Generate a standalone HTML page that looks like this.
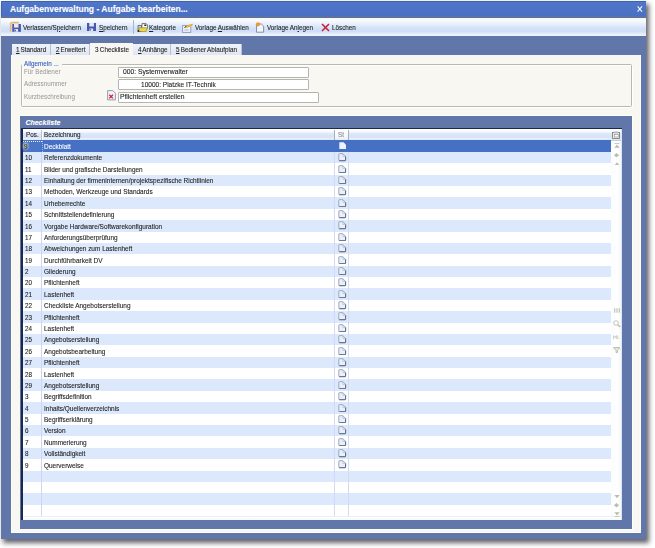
<!DOCTYPE html>
<html><head><meta charset="utf-8">
<style>
*{margin:0;padding:0;box-sizing:border-box}
html,body{width:655px;height:548px;overflow:hidden;background:#fff;font-family:"Liberation Sans",sans-serif;position:relative}
.abs{position:absolute}
.t{position:absolute;height:12px;line-height:12px;white-space:nowrap;transform-origin:0 50%;color:#222;-webkit-text-stroke:0.1px currentColor}
.u{text-decoration:underline;text-decoration-thickness:0.6px;text-underline-offset:1px}
</style></head><body>
<!-- shadow -->
<div class="abs" style="left:3px;top:4px;width:646px;height:539px;background:rgba(50,46,56,0.75);filter:blur(2.4px)"></div>
<!-- window base -->
<div class="abs" style="left:1px;top:1px;width:645px;height:538px;background:#6176a9"></div>
<!-- title -->
<div class="abs" style="left:1px;top:1px;width:645px;height:15px;background:linear-gradient(#4f76c8,#4a70c3);border-top:1px solid #3d62b0;border-left:1px solid #4066b4"></div>
<div class="t" style="left:10px;top:3px;font-size:8.5px;font-weight:bold;color:#fff">Aufgabenverwaltung - Aufgabe bearbeiten...</div>
<svg class="abs" style="left:636.8px;top:5.5px" width="6" height="6" viewBox="0 0 6 6"><path d="M0.6 0.4 L5 5.6 M5 0.4 L0.6 5.6" stroke="#f4f8ff" stroke-width="1.15"/></svg>
<div class="abs" style="left:1px;top:16px;width:645px;height:1.5px;background:#5f729e"></div>
<!-- toolbar -->
<div class="abs" style="left:1px;top:17.5px;width:645px;height:18.5px;background:linear-gradient(#f2f7fe 0%,#f9fbff 12%,#e8f0fc 33%,#d3e2f8 55%,#cfdef7 74%,#e2ecfb 87%,#f3f7fe 96%,#dfe7f4 100%)"></div>
<svg class="abs" style="left:9px;top:21px" width="13" height="12" viewBox="0 0 13 12"><path d="M1.6 10.5 V3 Q1.6 1.6 3 1.6 H10" stroke="#e9b86a" stroke-width="1.6" fill="none"/><rect x="3.3" y="3" width="8.6" height="7.8" fill="#4b57a9"/><rect x="5" y="3" width="4.5" height="3.6" fill="#e6eaf6"/><rect x="5.5" y="8" width="3.6" height="2.8" fill="#dfe5f3"/><rect x="6" y="8.8" width="1" height="1.5" fill="#4b57a9"/></svg>
<div class="t" style="left:22.7px;top:21.5px;font-size:7.1px;transform:scaleX(0.89);">Verlassen/S<span class="u">p</span>eichern</div>
<svg class="abs" style="left:87px;top:22.8px" width="9" height="8" viewBox="0 0 9 8"><rect x="0" y="0" width="9" height="8" fill="#4b57a9"/><rect x="2.3" y="0" width="4.6" height="3.5" fill="#e6eaf6"/><rect x="2.5" y="5.5" width="3.6" height="2.5" fill="#dfe5f3"/><rect x="3" y="6.2" width="1" height="1.3" fill="#4b57a9"/></svg>
<div class="t" style="left:99.1px;top:21.5px;font-size:7.1px;transform:scaleX(0.89);"><span class="u">S</span>peichern</div>
<div class="abs" style="left:132.5px;top:20px;width:1px;height:14px;background:#a9b5ca"></div>
<svg class="abs" style="left:136.5px;top:22.5px" width="11" height="9" viewBox="0 0 11 9"><path d="M1 8.5 V2.5 H4.5 V8.5Z" fill="#c9ccd6" stroke="#5a5e6a" stroke-width="0.8"/><path d="M5 3.5 V0.6 H9.2 L10.4 1.8 V5" fill="#fff" stroke="#50535e" stroke-width="0.8"/><rect x="7.3" y="1.5" width="2" height="1.5" fill="#222"/><path d="M1 8.6 L2.6 4.8 H10.6 L9 8.6Z" fill="#eed840" stroke="#8a7a20" stroke-width="0.6"/><circle cx="1.5" cy="8" r="0.9" fill="#222"/></svg>
<div class="t" style="left:149px;top:21.5px;font-size:7.1px;transform:scaleX(0.89);"><span class="u">K</span>ategorie</div>
<svg class="abs" style="left:182px;top:22.5px" width="12" height="10" viewBox="0 0 12 10"><rect x="0.6" y="2.4" width="8.2" height="7" fill="#eef0fa" stroke="#8e98b6" stroke-width="0.9"/><rect x="2.5" y="6" width="4" height="2" fill="#c8d0ee"/><path d="M2.5 4.5 L5 2.6 L9 1 L11.2 0.8 L10.4 2.6 L6.5 4.2 L4 5Z" fill="#eab03a"/><path d="M2.5 4.5 L4.2 3.3" stroke="#333" stroke-width="1"/></svg>
<div class="t" style="left:194.5px;top:21.5px;font-size:7.1px;transform:scaleX(0.89);">Vorlage <span class="u">A</span>uswählen</div>
<svg class="abs" style="left:255px;top:22px" width="10" height="11" viewBox="0 0 10 11"><path d="M1.5 2 H6.4 L8.6 4.2 V10.2 H1.5Z" fill="#f2f5fc" stroke="#7a87a2" stroke-width="0.9"/><circle cx="3" cy="2.3" r="2.1" fill="#ea9a3a"/></svg>
<div class="t" style="left:267.1px;top:21.5px;font-size:7.1px;transform:scaleX(0.89);">Vorlage An<span class="u">l</span>egen</div>
<svg class="abs" style="left:320.5px;top:23px" width="9" height="9" viewBox="0 0 9 9"><path d="M1 1 L8 8 M8 1 L1 8" stroke="#c81c30" stroke-width="1.5"/></svg>
<div class="t" style="left:332px;top:21.5px;font-size:7.1px;transform:scaleX(0.89);">Löschen</div>
<!-- tabs -->
<div class="abs" style="left:12px;top:44px;width:39px;height:11px;background:linear-gradient(#f0f4fa,#dfe6f3);border-right:1px solid #b4c0d8"></div>
<div class="abs" style="left:51px;top:44px;width:39px;height:11px;background:linear-gradient(#f0f4fa,#dfe6f3);border-right:1px solid #b4c0d8"></div>
<div class="abs" style="left:90px;top:43px;width:43px;height:12px;background:#f8f7f3"></div>
<div class="abs" style="left:133px;top:44px;width:38px;height:11px;background:linear-gradient(#f0f4fa,#dfe6f3);border-right:1px solid #b4c0d8"></div>
<div class="abs" style="left:171px;top:44px;width:71px;height:11px;background:linear-gradient(#f0f4fa,#dfe6f3);border-right:1px solid #b4c0d8"></div>
<div class="t" style="left:15.9px;top:44.3px;font-size:7.1px;transform:scaleX(0.89);word-spacing:-0.8px"><span class="u">1</span> Standard</div>
<div class="t" style="left:55.6px;top:44.3px;font-size:7.1px;transform:scaleX(0.89);word-spacing:-0.8px"><span class="u">2</span> Erweitert</div>
<div class="t" style="left:94.8px;top:43.6px;font-size:7.1px;transform:scaleX(0.89);word-spacing:-0.5px">3 Checkliste</div>
<div class="t" style="left:137.5px;top:44.3px;font-size:7.1px;transform:scaleX(0.89);word-spacing:-0.8px"><span class="u">4</span> Anhänge</div>
<div class="t" style="left:176.2px;top:44.3px;font-size:7.1px;transform:scaleX(0.89);word-spacing:-0.5px"><span class="u">5</span> Bediener Ablaufplan</div>
<!-- content panel -->
<div class="abs" style="left:11px;top:55px;width:630px;height:478px;background:#fdfdfb"></div>
<div class="abs" style="left:12px;top:55px;width:628px;height:477px;background:#f8f7f2"></div>
<!-- group box -->
<div class="abs" style="left:21px;top:63.5px;width:611px;height:43.5px;border:1px solid #bab8b0;border-radius:1.5px;box-shadow:1px 1px 0 #fff, inset 1px 1px 0 #fff"></div>
<div class="abs" style="left:22px;top:59px;width:40px;height:9px;background:#f8f7f2"></div>
<div class="t" style="left:23.8px;top:57.5px;font-size:7.1px;transform:scaleX(0.89);color:#2e5cbc;">Allgemein ...</div>
<div class="t" style="left:24.4px;top:65.6px;font-size:7.1px;transform:scaleX(0.89);color:#969696;-webkit-text-stroke:0">Für Bediener</div>
<div class="t" style="left:24.4px;top:78.2px;font-size:7.1px;transform:scaleX(0.89);color:#969696;-webkit-text-stroke:0">Adressnummer</div>
<div class="t" style="left:24.4px;top:90.7px;font-size:7.1px;transform:scaleX(0.89);color:#969696;-webkit-text-stroke:0">Kurzbeschreibung</div>
<div class="abs" style="left:118px;top:66.5px;width:191px;height:11px;background:#fff;border:1px solid #b5b5b0;border-radius:1px"></div>
<div class="abs" style="left:118px;top:79px;width:191px;height:11px;background:#fff;border:1px solid #b5b5b0;border-radius:1px"></div>
<div class="abs" style="left:118px;top:91.5px;width:201px;height:11.5px;background:#fff;border:1px solid #b5b5b0;border-radius:1px"></div>
<div class="t" style="left:122.8px;top:66px;font-size:7.1px;transform:scaleX(0.95);">000: Systemverwalter</div>
<div class="t" style="left:140.8px;top:78.8px;font-size:7.1px;transform:scaleX(0.92);">10000: Platzke IT-Technik</div>
<div class="t" style="left:120px;top:90.8px;font-size:7.1px;transform:scaleX(0.95);">Pflichtenheft erstellen</div>
<svg class="abs" style="left:106.5px;top:90px" width="9" height="10.5" viewBox="0 0 9 10.5"><path d="M0.6 0.6 L5.8 0.6 L8.4 3.2 L8.4 9.9 L0.6 9.9Z" fill="#eef2fa" stroke="#8594b4" stroke-width="0.9"/><path d="M2.3 4.8 L5.9 8.4 M5.9 4.8 L2.3 8.4" stroke="#e01c24" stroke-width="1.3"/></svg>
<!-- checkliste panel -->
<div class="abs" style="left:19.5px;top:114.5px;width:613.5px;height:415px;background:#fdfdfb"></div>
<div class="abs" style="left:20px;top:115.5px;width:612px;height:413px;background:#6176a9"></div>
<div class="t" style="left:25.4px;top:117px;font-size:7px;font-weight:bold;font-style:italic;color:#fff">Checkliste</div>
<!-- grid -->
<div class="abs" style="left:21px;top:127.8px;width:601px;height:391.8px;background:#fff;border-top:1.5px solid #1d2948;border-left:2px solid #1d2948"></div>
<div class="abs" style="left:23px;top:129.3px;width:599px;height:11.4px;background:linear-gradient(#ffffff 0%,#f6f9fe 22%,#dce8f9 40%,#d5e3f7 68%,#edf3fc 84%,#b2c3dc 100%)"></div>
<div class="abs" style="left:41.2px;top:130px;width:1px;height:10px;background:#b8c0cc"></div>
<div class="abs" style="left:42.2px;top:130px;width:1px;height:10px;background:#fff"></div>
<div class="abs" style="left:334px;top:129.5px;width:15px;height:11px;border-left:1px solid #a8aeb8;border-right:1px solid #a8aeb8;background:linear-gradient(#ffffff,#f4f7fc 60%,#e2eaf7)"></div>
<div class="t" style="left:25.6px;top:129.3px;font-size:7.1px;transform:scaleX(0.89);">Pos.</div>
<div class="t" style="left:44.3px;top:129.3px;font-size:7.1px;transform:scaleX(0.89);">Bezeichnung</div>
<div class="t" style="left:337.7px;top:129.3px;font-size:7.1px;transform:scaleX(0.89);color:#8a8a8a;">St</div>
<div class="abs" style="left:23px;top:140.45px;width:588px;height:11.383px;background:#4570c4"></div>
<div class="abs" style="left:23px;top:140.45px;width:18px;height:11.383px;background:#4a74c4"></div>
<div class="abs" style="left:23.2px;top:143.45px;width:4.5px;height:6px;background:#f4efe0;filter:blur(0.9px);opacity:.65"></div>
<div class="t" style="left:24.2px;top:140.85px;font-size:7.1px;transform:scaleX(0.89);color:#3a3012;">9</div>
<div class="t" style="left:43.8px;top:140.85px;font-size:7.1px;transform:scaleX(0.91);color:#fff;">Deckblatt</div>
<svg class="abs" style="left:338.5px;top:141.75px" width="8" height="8" viewBox="0 0 8 8"><path d="M0.3 0.3 H4.6 L7 2.7 V7 H0.3Z" fill="#eef3fc"/></svg>
<div class="abs" style="left:23px;top:151.83px;width:588px;height:11.383px;background:#dce8fb"></div>
<div class="t" style="left:24.6px;top:152.233px;font-size:7.1px;transform:scaleX(0.89);color:#222;">10</div>
<div class="t" style="left:43.8px;top:152.233px;font-size:7.1px;transform:scaleX(0.91);color:#222;">Referenzdokumente</div>
<svg class="abs" style="left:338px;top:153.13px" width="8.5" height="8.5" viewBox="0 0 8.5 8.5"><path d="M0.8 1.2 Q0.8 0.7 1.3 0.7 H4.9 L7.6 3.4 V7.2 Q7.6 7.7 7.1 7.7 H1.3 Q0.8 7.7 0.8 7.2Z" fill="#e9f0fb" stroke="#8a97b0" stroke-width="0.8"/><path d="M7.6 3.4 V7.2 Q7.6 7.7 7.1 7.7 H1.3" fill="none" stroke="#5d6a84" stroke-width="1"/><path d="M4.9 0.7 V3.4 H7.6" fill="none" stroke="#a5b1c8" stroke-width="0.6"/></svg>
<div class="abs" style="left:23px;top:163.22px;width:588px;height:11.383px;background:#ffffff"></div>
<div class="t" style="left:24.6px;top:163.61599999999999px;font-size:7.1px;transform:scaleX(0.89);color:#222;">11</div>
<div class="t" style="left:43.8px;top:163.61599999999999px;font-size:7.1px;transform:scaleX(0.91);color:#222;">Bilder und grafische Darstellungen</div>
<svg class="abs" style="left:338px;top:164.52px" width="8.5" height="8.5" viewBox="0 0 8.5 8.5"><path d="M0.8 1.2 Q0.8 0.7 1.3 0.7 H4.9 L7.6 3.4 V7.2 Q7.6 7.7 7.1 7.7 H1.3 Q0.8 7.7 0.8 7.2Z" fill="#e9f0fb" stroke="#8a97b0" stroke-width="0.8"/><path d="M7.6 3.4 V7.2 Q7.6 7.7 7.1 7.7 H1.3" fill="none" stroke="#5d6a84" stroke-width="1"/><path d="M4.9 0.7 V3.4 H7.6" fill="none" stroke="#a5b1c8" stroke-width="0.6"/></svg>
<div class="abs" style="left:23px;top:174.60px;width:588px;height:11.383px;background:#dce8fb"></div>
<div class="t" style="left:24.6px;top:174.999px;font-size:7.1px;transform:scaleX(0.89);color:#222;">12</div>
<div class="t" style="left:43.8px;top:174.999px;font-size:7.1px;transform:scaleX(0.91);color:#222;">Einhaltung der firmeninternen/projektspezifische Richtlinien</div>
<svg class="abs" style="left:338px;top:175.90px" width="8.5" height="8.5" viewBox="0 0 8.5 8.5"><path d="M0.8 1.2 Q0.8 0.7 1.3 0.7 H4.9 L7.6 3.4 V7.2 Q7.6 7.7 7.1 7.7 H1.3 Q0.8 7.7 0.8 7.2Z" fill="#e9f0fb" stroke="#8a97b0" stroke-width="0.8"/><path d="M7.6 3.4 V7.2 Q7.6 7.7 7.1 7.7 H1.3" fill="none" stroke="#5d6a84" stroke-width="1"/><path d="M4.9 0.7 V3.4 H7.6" fill="none" stroke="#a5b1c8" stroke-width="0.6"/></svg>
<div class="abs" style="left:23px;top:185.98px;width:588px;height:11.383px;background:#ffffff"></div>
<div class="t" style="left:24.6px;top:186.38199999999998px;font-size:7.1px;transform:scaleX(0.89);color:#222;">13</div>
<div class="t" style="left:43.8px;top:186.38199999999998px;font-size:7.1px;transform:scaleX(0.91);color:#222;">Methoden, Werkzeuge und Standards</div>
<svg class="abs" style="left:338px;top:187.28px" width="8.5" height="8.5" viewBox="0 0 8.5 8.5"><path d="M0.8 1.2 Q0.8 0.7 1.3 0.7 H4.9 L7.6 3.4 V7.2 Q7.6 7.7 7.1 7.7 H1.3 Q0.8 7.7 0.8 7.2Z" fill="#e9f0fb" stroke="#8a97b0" stroke-width="0.8"/><path d="M7.6 3.4 V7.2 Q7.6 7.7 7.1 7.7 H1.3" fill="none" stroke="#5d6a84" stroke-width="1"/><path d="M4.9 0.7 V3.4 H7.6" fill="none" stroke="#a5b1c8" stroke-width="0.6"/></svg>
<div class="abs" style="left:23px;top:197.36px;width:588px;height:11.383px;background:#dce8fb"></div>
<div class="t" style="left:24.6px;top:197.765px;font-size:7.1px;transform:scaleX(0.89);color:#222;">14</div>
<div class="t" style="left:43.8px;top:197.765px;font-size:7.1px;transform:scaleX(0.91);color:#222;">Urheberrechte</div>
<svg class="abs" style="left:338px;top:198.66px" width="8.5" height="8.5" viewBox="0 0 8.5 8.5"><path d="M0.8 1.2 Q0.8 0.7 1.3 0.7 H4.9 L7.6 3.4 V7.2 Q7.6 7.7 7.1 7.7 H1.3 Q0.8 7.7 0.8 7.2Z" fill="#e9f0fb" stroke="#8a97b0" stroke-width="0.8"/><path d="M7.6 3.4 V7.2 Q7.6 7.7 7.1 7.7 H1.3" fill="none" stroke="#5d6a84" stroke-width="1"/><path d="M4.9 0.7 V3.4 H7.6" fill="none" stroke="#a5b1c8" stroke-width="0.6"/></svg>
<div class="abs" style="left:23px;top:208.75px;width:588px;height:11.383px;background:#ffffff"></div>
<div class="t" style="left:24.6px;top:209.148px;font-size:7.1px;transform:scaleX(0.89);color:#222;">15</div>
<div class="t" style="left:43.8px;top:209.148px;font-size:7.1px;transform:scaleX(0.91);color:#222;">Schnittstellendefinierung</div>
<svg class="abs" style="left:338px;top:210.05px" width="8.5" height="8.5" viewBox="0 0 8.5 8.5"><path d="M0.8 1.2 Q0.8 0.7 1.3 0.7 H4.9 L7.6 3.4 V7.2 Q7.6 7.7 7.1 7.7 H1.3 Q0.8 7.7 0.8 7.2Z" fill="#e9f0fb" stroke="#8a97b0" stroke-width="0.8"/><path d="M7.6 3.4 V7.2 Q7.6 7.7 7.1 7.7 H1.3" fill="none" stroke="#5d6a84" stroke-width="1"/><path d="M4.9 0.7 V3.4 H7.6" fill="none" stroke="#a5b1c8" stroke-width="0.6"/></svg>
<div class="abs" style="left:23px;top:220.13px;width:588px;height:11.383px;background:#dce8fb"></div>
<div class="t" style="left:24.6px;top:220.53099999999998px;font-size:7.1px;transform:scaleX(0.89);color:#222;">16</div>
<div class="t" style="left:43.8px;top:220.53099999999998px;font-size:7.1px;transform:scaleX(0.91);color:#222;">Vorgabe Hardware/Softwarekonfiguration</div>
<svg class="abs" style="left:338px;top:221.43px" width="8.5" height="8.5" viewBox="0 0 8.5 8.5"><path d="M0.8 1.2 Q0.8 0.7 1.3 0.7 H4.9 L7.6 3.4 V7.2 Q7.6 7.7 7.1 7.7 H1.3 Q0.8 7.7 0.8 7.2Z" fill="#e9f0fb" stroke="#8a97b0" stroke-width="0.8"/><path d="M7.6 3.4 V7.2 Q7.6 7.7 7.1 7.7 H1.3" fill="none" stroke="#5d6a84" stroke-width="1"/><path d="M4.9 0.7 V3.4 H7.6" fill="none" stroke="#a5b1c8" stroke-width="0.6"/></svg>
<div class="abs" style="left:23px;top:231.51px;width:588px;height:11.383px;background:#ffffff"></div>
<div class="t" style="left:24.6px;top:231.914px;font-size:7.1px;transform:scaleX(0.89);color:#222;">17</div>
<div class="t" style="left:43.8px;top:231.914px;font-size:7.1px;transform:scaleX(0.91);color:#222;">Anforderungsüberprüfung</div>
<svg class="abs" style="left:338px;top:232.81px" width="8.5" height="8.5" viewBox="0 0 8.5 8.5"><path d="M0.8 1.2 Q0.8 0.7 1.3 0.7 H4.9 L7.6 3.4 V7.2 Q7.6 7.7 7.1 7.7 H1.3 Q0.8 7.7 0.8 7.2Z" fill="#e9f0fb" stroke="#8a97b0" stroke-width="0.8"/><path d="M7.6 3.4 V7.2 Q7.6 7.7 7.1 7.7 H1.3" fill="none" stroke="#5d6a84" stroke-width="1"/><path d="M4.9 0.7 V3.4 H7.6" fill="none" stroke="#a5b1c8" stroke-width="0.6"/></svg>
<div class="abs" style="left:23px;top:242.90px;width:588px;height:11.383px;background:#dce8fb"></div>
<div class="t" style="left:24.6px;top:243.297px;font-size:7.1px;transform:scaleX(0.89);color:#222;">18</div>
<div class="t" style="left:43.8px;top:243.297px;font-size:7.1px;transform:scaleX(0.91);color:#222;">Abweichungen zum Lastenheft</div>
<svg class="abs" style="left:338px;top:244.20px" width="8.5" height="8.5" viewBox="0 0 8.5 8.5"><path d="M0.8 1.2 Q0.8 0.7 1.3 0.7 H4.9 L7.6 3.4 V7.2 Q7.6 7.7 7.1 7.7 H1.3 Q0.8 7.7 0.8 7.2Z" fill="#e9f0fb" stroke="#8a97b0" stroke-width="0.8"/><path d="M7.6 3.4 V7.2 Q7.6 7.7 7.1 7.7 H1.3" fill="none" stroke="#5d6a84" stroke-width="1"/><path d="M4.9 0.7 V3.4 H7.6" fill="none" stroke="#a5b1c8" stroke-width="0.6"/></svg>
<div class="abs" style="left:23px;top:254.28px;width:588px;height:11.383px;background:#ffffff"></div>
<div class="t" style="left:24.6px;top:254.67999999999995px;font-size:7.1px;transform:scaleX(0.89);color:#222;">19</div>
<div class="t" style="left:43.8px;top:254.67999999999995px;font-size:7.1px;transform:scaleX(0.91);color:#222;">Durchführbarkeit DV</div>
<svg class="abs" style="left:338px;top:255.58px" width="8.5" height="8.5" viewBox="0 0 8.5 8.5"><path d="M0.8 1.2 Q0.8 0.7 1.3 0.7 H4.9 L7.6 3.4 V7.2 Q7.6 7.7 7.1 7.7 H1.3 Q0.8 7.7 0.8 7.2Z" fill="#e9f0fb" stroke="#8a97b0" stroke-width="0.8"/><path d="M7.6 3.4 V7.2 Q7.6 7.7 7.1 7.7 H1.3" fill="none" stroke="#5d6a84" stroke-width="1"/><path d="M4.9 0.7 V3.4 H7.6" fill="none" stroke="#a5b1c8" stroke-width="0.6"/></svg>
<div class="abs" style="left:23px;top:265.66px;width:588px;height:11.383px;background:#dce8fb"></div>
<div class="t" style="left:24.6px;top:266.063px;font-size:7.1px;transform:scaleX(0.89);color:#222;">2</div>
<div class="t" style="left:43.8px;top:266.063px;font-size:7.1px;transform:scaleX(0.91);color:#222;">Gliederung</div>
<svg class="abs" style="left:338px;top:266.96px" width="8.5" height="8.5" viewBox="0 0 8.5 8.5"><path d="M0.8 1.2 Q0.8 0.7 1.3 0.7 H4.9 L7.6 3.4 V7.2 Q7.6 7.7 7.1 7.7 H1.3 Q0.8 7.7 0.8 7.2Z" fill="#e9f0fb" stroke="#8a97b0" stroke-width="0.8"/><path d="M7.6 3.4 V7.2 Q7.6 7.7 7.1 7.7 H1.3" fill="none" stroke="#5d6a84" stroke-width="1"/><path d="M4.9 0.7 V3.4 H7.6" fill="none" stroke="#a5b1c8" stroke-width="0.6"/></svg>
<div class="abs" style="left:23px;top:277.05px;width:588px;height:11.383px;background:#ffffff"></div>
<div class="t" style="left:24.6px;top:277.44599999999997px;font-size:7.1px;transform:scaleX(0.89);color:#222;">20</div>
<div class="t" style="left:43.8px;top:277.44599999999997px;font-size:7.1px;transform:scaleX(0.91);color:#222;">Pflichtenheft</div>
<svg class="abs" style="left:338px;top:278.35px" width="8.5" height="8.5" viewBox="0 0 8.5 8.5"><path d="M0.8 1.2 Q0.8 0.7 1.3 0.7 H4.9 L7.6 3.4 V7.2 Q7.6 7.7 7.1 7.7 H1.3 Q0.8 7.7 0.8 7.2Z" fill="#e9f0fb" stroke="#8a97b0" stroke-width="0.8"/><path d="M7.6 3.4 V7.2 Q7.6 7.7 7.1 7.7 H1.3" fill="none" stroke="#5d6a84" stroke-width="1"/><path d="M4.9 0.7 V3.4 H7.6" fill="none" stroke="#a5b1c8" stroke-width="0.6"/></svg>
<div class="abs" style="left:23px;top:288.43px;width:588px;height:11.383px;background:#dce8fb"></div>
<div class="t" style="left:24.6px;top:288.82899999999995px;font-size:7.1px;transform:scaleX(0.89);color:#222;">21</div>
<div class="t" style="left:43.8px;top:288.82899999999995px;font-size:7.1px;transform:scaleX(0.91);color:#222;">Lastenheft</div>
<svg class="abs" style="left:338px;top:289.73px" width="8.5" height="8.5" viewBox="0 0 8.5 8.5"><path d="M0.8 1.2 Q0.8 0.7 1.3 0.7 H4.9 L7.6 3.4 V7.2 Q7.6 7.7 7.1 7.7 H1.3 Q0.8 7.7 0.8 7.2Z" fill="#e9f0fb" stroke="#8a97b0" stroke-width="0.8"/><path d="M7.6 3.4 V7.2 Q7.6 7.7 7.1 7.7 H1.3" fill="none" stroke="#5d6a84" stroke-width="1"/><path d="M4.9 0.7 V3.4 H7.6" fill="none" stroke="#a5b1c8" stroke-width="0.6"/></svg>
<div class="abs" style="left:23px;top:299.81px;width:588px;height:11.383px;background:#ffffff"></div>
<div class="t" style="left:24.6px;top:300.212px;font-size:7.1px;transform:scaleX(0.89);color:#222;">22</div>
<div class="t" style="left:43.8px;top:300.212px;font-size:7.1px;transform:scaleX(0.91);color:#222;">Checkliste Angebotserstellung</div>
<svg class="abs" style="left:338px;top:301.11px" width="8.5" height="8.5" viewBox="0 0 8.5 8.5"><path d="M0.8 1.2 Q0.8 0.7 1.3 0.7 H4.9 L7.6 3.4 V7.2 Q7.6 7.7 7.1 7.7 H1.3 Q0.8 7.7 0.8 7.2Z" fill="#e9f0fb" stroke="#8a97b0" stroke-width="0.8"/><path d="M7.6 3.4 V7.2 Q7.6 7.7 7.1 7.7 H1.3" fill="none" stroke="#5d6a84" stroke-width="1"/><path d="M4.9 0.7 V3.4 H7.6" fill="none" stroke="#a5b1c8" stroke-width="0.6"/></svg>
<div class="abs" style="left:23px;top:311.19px;width:588px;height:11.383px;background:#dce8fb"></div>
<div class="t" style="left:24.6px;top:311.5949999999999px;font-size:7.1px;transform:scaleX(0.89);color:#222;">23</div>
<div class="t" style="left:43.8px;top:311.5949999999999px;font-size:7.1px;transform:scaleX(0.91);color:#222;">Pflichtenheft</div>
<svg class="abs" style="left:338px;top:312.49px" width="8.5" height="8.5" viewBox="0 0 8.5 8.5"><path d="M0.8 1.2 Q0.8 0.7 1.3 0.7 H4.9 L7.6 3.4 V7.2 Q7.6 7.7 7.1 7.7 H1.3 Q0.8 7.7 0.8 7.2Z" fill="#e9f0fb" stroke="#8a97b0" stroke-width="0.8"/><path d="M7.6 3.4 V7.2 Q7.6 7.7 7.1 7.7 H1.3" fill="none" stroke="#5d6a84" stroke-width="1"/><path d="M4.9 0.7 V3.4 H7.6" fill="none" stroke="#a5b1c8" stroke-width="0.6"/></svg>
<div class="abs" style="left:23px;top:322.58px;width:588px;height:11.383px;background:#ffffff"></div>
<div class="t" style="left:24.6px;top:322.97799999999995px;font-size:7.1px;transform:scaleX(0.89);color:#222;">24</div>
<div class="t" style="left:43.8px;top:322.97799999999995px;font-size:7.1px;transform:scaleX(0.91);color:#222;">Lastenheft</div>
<svg class="abs" style="left:338px;top:323.88px" width="8.5" height="8.5" viewBox="0 0 8.5 8.5"><path d="M0.8 1.2 Q0.8 0.7 1.3 0.7 H4.9 L7.6 3.4 V7.2 Q7.6 7.7 7.1 7.7 H1.3 Q0.8 7.7 0.8 7.2Z" fill="#e9f0fb" stroke="#8a97b0" stroke-width="0.8"/><path d="M7.6 3.4 V7.2 Q7.6 7.7 7.1 7.7 H1.3" fill="none" stroke="#5d6a84" stroke-width="1"/><path d="M4.9 0.7 V3.4 H7.6" fill="none" stroke="#a5b1c8" stroke-width="0.6"/></svg>
<div class="abs" style="left:23px;top:333.96px;width:588px;height:11.383px;background:#dce8fb"></div>
<div class="t" style="left:24.6px;top:334.361px;font-size:7.1px;transform:scaleX(0.89);color:#222;">25</div>
<div class="t" style="left:43.8px;top:334.361px;font-size:7.1px;transform:scaleX(0.91);color:#222;">Angebotserstellung</div>
<svg class="abs" style="left:338px;top:335.26px" width="8.5" height="8.5" viewBox="0 0 8.5 8.5"><path d="M0.8 1.2 Q0.8 0.7 1.3 0.7 H4.9 L7.6 3.4 V7.2 Q7.6 7.7 7.1 7.7 H1.3 Q0.8 7.7 0.8 7.2Z" fill="#e9f0fb" stroke="#8a97b0" stroke-width="0.8"/><path d="M7.6 3.4 V7.2 Q7.6 7.7 7.1 7.7 H1.3" fill="none" stroke="#5d6a84" stroke-width="1"/><path d="M4.9 0.7 V3.4 H7.6" fill="none" stroke="#a5b1c8" stroke-width="0.6"/></svg>
<div class="abs" style="left:23px;top:345.34px;width:588px;height:11.383px;background:#ffffff"></div>
<div class="t" style="left:24.6px;top:345.7439999999999px;font-size:7.1px;transform:scaleX(0.89);color:#222;">26</div>
<div class="t" style="left:43.8px;top:345.7439999999999px;font-size:7.1px;transform:scaleX(0.91);color:#222;">Angebotsbearbeitung</div>
<svg class="abs" style="left:338px;top:346.64px" width="8.5" height="8.5" viewBox="0 0 8.5 8.5"><path d="M0.8 1.2 Q0.8 0.7 1.3 0.7 H4.9 L7.6 3.4 V7.2 Q7.6 7.7 7.1 7.7 H1.3 Q0.8 7.7 0.8 7.2Z" fill="#e9f0fb" stroke="#8a97b0" stroke-width="0.8"/><path d="M7.6 3.4 V7.2 Q7.6 7.7 7.1 7.7 H1.3" fill="none" stroke="#5d6a84" stroke-width="1"/><path d="M4.9 0.7 V3.4 H7.6" fill="none" stroke="#a5b1c8" stroke-width="0.6"/></svg>
<div class="abs" style="left:23px;top:356.73px;width:588px;height:11.383px;background:#dce8fb"></div>
<div class="t" style="left:24.6px;top:357.12699999999995px;font-size:7.1px;transform:scaleX(0.89);color:#222;">27</div>
<div class="t" style="left:43.8px;top:357.12699999999995px;font-size:7.1px;transform:scaleX(0.91);color:#222;">Pflichtenheft</div>
<svg class="abs" style="left:338px;top:358.03px" width="8.5" height="8.5" viewBox="0 0 8.5 8.5"><path d="M0.8 1.2 Q0.8 0.7 1.3 0.7 H4.9 L7.6 3.4 V7.2 Q7.6 7.7 7.1 7.7 H1.3 Q0.8 7.7 0.8 7.2Z" fill="#e9f0fb" stroke="#8a97b0" stroke-width="0.8"/><path d="M7.6 3.4 V7.2 Q7.6 7.7 7.1 7.7 H1.3" fill="none" stroke="#5d6a84" stroke-width="1"/><path d="M4.9 0.7 V3.4 H7.6" fill="none" stroke="#a5b1c8" stroke-width="0.6"/></svg>
<div class="abs" style="left:23px;top:368.11px;width:588px;height:11.383px;background:#ffffff"></div>
<div class="t" style="left:24.6px;top:368.50999999999993px;font-size:7.1px;transform:scaleX(0.89);color:#222;">28</div>
<div class="t" style="left:43.8px;top:368.50999999999993px;font-size:7.1px;transform:scaleX(0.91);color:#222;">Lastenheft</div>
<svg class="abs" style="left:338px;top:369.41px" width="8.5" height="8.5" viewBox="0 0 8.5 8.5"><path d="M0.8 1.2 Q0.8 0.7 1.3 0.7 H4.9 L7.6 3.4 V7.2 Q7.6 7.7 7.1 7.7 H1.3 Q0.8 7.7 0.8 7.2Z" fill="#e9f0fb" stroke="#8a97b0" stroke-width="0.8"/><path d="M7.6 3.4 V7.2 Q7.6 7.7 7.1 7.7 H1.3" fill="none" stroke="#5d6a84" stroke-width="1"/><path d="M4.9 0.7 V3.4 H7.6" fill="none" stroke="#a5b1c8" stroke-width="0.6"/></svg>
<div class="abs" style="left:23px;top:379.49px;width:588px;height:11.383px;background:#dce8fb"></div>
<div class="t" style="left:24.6px;top:379.8929999999999px;font-size:7.1px;transform:scaleX(0.89);color:#222;">29</div>
<div class="t" style="left:43.8px;top:379.8929999999999px;font-size:7.1px;transform:scaleX(0.91);color:#222;">Angebotserstellung</div>
<svg class="abs" style="left:338px;top:380.79px" width="8.5" height="8.5" viewBox="0 0 8.5 8.5"><path d="M0.8 1.2 Q0.8 0.7 1.3 0.7 H4.9 L7.6 3.4 V7.2 Q7.6 7.7 7.1 7.7 H1.3 Q0.8 7.7 0.8 7.2Z" fill="#e9f0fb" stroke="#8a97b0" stroke-width="0.8"/><path d="M7.6 3.4 V7.2 Q7.6 7.7 7.1 7.7 H1.3" fill="none" stroke="#5d6a84" stroke-width="1"/><path d="M4.9 0.7 V3.4 H7.6" fill="none" stroke="#a5b1c8" stroke-width="0.6"/></svg>
<div class="abs" style="left:23px;top:390.88px;width:588px;height:11.383px;background:#ffffff"></div>
<div class="t" style="left:24.6px;top:391.27599999999995px;font-size:7.1px;transform:scaleX(0.89);color:#222;">3</div>
<div class="t" style="left:43.8px;top:391.27599999999995px;font-size:7.1px;transform:scaleX(0.91);color:#222;">Begriffsdefinition</div>
<svg class="abs" style="left:338px;top:392.18px" width="8.5" height="8.5" viewBox="0 0 8.5 8.5"><path d="M0.8 1.2 Q0.8 0.7 1.3 0.7 H4.9 L7.6 3.4 V7.2 Q7.6 7.7 7.1 7.7 H1.3 Q0.8 7.7 0.8 7.2Z" fill="#e9f0fb" stroke="#8a97b0" stroke-width="0.8"/><path d="M7.6 3.4 V7.2 Q7.6 7.7 7.1 7.7 H1.3" fill="none" stroke="#5d6a84" stroke-width="1"/><path d="M4.9 0.7 V3.4 H7.6" fill="none" stroke="#a5b1c8" stroke-width="0.6"/></svg>
<div class="abs" style="left:23px;top:402.26px;width:588px;height:11.383px;background:#dce8fb"></div>
<div class="t" style="left:24.6px;top:402.65899999999993px;font-size:7.1px;transform:scaleX(0.89);color:#222;">4</div>
<div class="t" style="left:43.8px;top:402.65899999999993px;font-size:7.1px;transform:scaleX(0.91);color:#222;">Inhalts/Quellenverzeichnis</div>
<svg class="abs" style="left:338px;top:403.56px" width="8.5" height="8.5" viewBox="0 0 8.5 8.5"><path d="M0.8 1.2 Q0.8 0.7 1.3 0.7 H4.9 L7.6 3.4 V7.2 Q7.6 7.7 7.1 7.7 H1.3 Q0.8 7.7 0.8 7.2Z" fill="#e9f0fb" stroke="#8a97b0" stroke-width="0.8"/><path d="M7.6 3.4 V7.2 Q7.6 7.7 7.1 7.7 H1.3" fill="none" stroke="#5d6a84" stroke-width="1"/><path d="M4.9 0.7 V3.4 H7.6" fill="none" stroke="#a5b1c8" stroke-width="0.6"/></svg>
<div class="abs" style="left:23px;top:413.64px;width:588px;height:11.383px;background:#ffffff"></div>
<div class="t" style="left:24.6px;top:414.042px;font-size:7.1px;transform:scaleX(0.89);color:#222;">5</div>
<div class="t" style="left:43.8px;top:414.042px;font-size:7.1px;transform:scaleX(0.91);color:#222;">Begriffserklärung</div>
<svg class="abs" style="left:338px;top:414.94px" width="8.5" height="8.5" viewBox="0 0 8.5 8.5"><path d="M0.8 1.2 Q0.8 0.7 1.3 0.7 H4.9 L7.6 3.4 V7.2 Q7.6 7.7 7.1 7.7 H1.3 Q0.8 7.7 0.8 7.2Z" fill="#e9f0fb" stroke="#8a97b0" stroke-width="0.8"/><path d="M7.6 3.4 V7.2 Q7.6 7.7 7.1 7.7 H1.3" fill="none" stroke="#5d6a84" stroke-width="1"/><path d="M4.9 0.7 V3.4 H7.6" fill="none" stroke="#a5b1c8" stroke-width="0.6"/></svg>
<div class="abs" style="left:23px;top:425.02px;width:588px;height:11.383px;background:#dce8fb"></div>
<div class="t" style="left:24.6px;top:425.42499999999995px;font-size:7.1px;transform:scaleX(0.89);color:#222;">6</div>
<div class="t" style="left:43.8px;top:425.42499999999995px;font-size:7.1px;transform:scaleX(0.91);color:#222;">Version</div>
<svg class="abs" style="left:338px;top:426.32px" width="8.5" height="8.5" viewBox="0 0 8.5 8.5"><path d="M0.8 1.2 Q0.8 0.7 1.3 0.7 H4.9 L7.6 3.4 V7.2 Q7.6 7.7 7.1 7.7 H1.3 Q0.8 7.7 0.8 7.2Z" fill="#e9f0fb" stroke="#8a97b0" stroke-width="0.8"/><path d="M7.6 3.4 V7.2 Q7.6 7.7 7.1 7.7 H1.3" fill="none" stroke="#5d6a84" stroke-width="1"/><path d="M4.9 0.7 V3.4 H7.6" fill="none" stroke="#a5b1c8" stroke-width="0.6"/></svg>
<div class="abs" style="left:23px;top:436.41px;width:588px;height:11.383px;background:#ffffff"></div>
<div class="t" style="left:24.6px;top:436.80799999999994px;font-size:7.1px;transform:scaleX(0.89);color:#222;">7</div>
<div class="t" style="left:43.8px;top:436.80799999999994px;font-size:7.1px;transform:scaleX(0.91);color:#222;">Nummerierung</div>
<svg class="abs" style="left:338px;top:437.71px" width="8.5" height="8.5" viewBox="0 0 8.5 8.5"><path d="M0.8 1.2 Q0.8 0.7 1.3 0.7 H4.9 L7.6 3.4 V7.2 Q7.6 7.7 7.1 7.7 H1.3 Q0.8 7.7 0.8 7.2Z" fill="#e9f0fb" stroke="#8a97b0" stroke-width="0.8"/><path d="M7.6 3.4 V7.2 Q7.6 7.7 7.1 7.7 H1.3" fill="none" stroke="#5d6a84" stroke-width="1"/><path d="M4.9 0.7 V3.4 H7.6" fill="none" stroke="#a5b1c8" stroke-width="0.6"/></svg>
<div class="abs" style="left:23px;top:447.79px;width:588px;height:11.383px;background:#dce8fb"></div>
<div class="t" style="left:24.6px;top:448.1909999999999px;font-size:7.1px;transform:scaleX(0.89);color:#222;">8</div>
<div class="t" style="left:43.8px;top:448.1909999999999px;font-size:7.1px;transform:scaleX(0.91);color:#222;">Vollständigkeit</div>
<svg class="abs" style="left:338px;top:449.09px" width="8.5" height="8.5" viewBox="0 0 8.5 8.5"><path d="M0.8 1.2 Q0.8 0.7 1.3 0.7 H4.9 L7.6 3.4 V7.2 Q7.6 7.7 7.1 7.7 H1.3 Q0.8 7.7 0.8 7.2Z" fill="#e9f0fb" stroke="#8a97b0" stroke-width="0.8"/><path d="M7.6 3.4 V7.2 Q7.6 7.7 7.1 7.7 H1.3" fill="none" stroke="#5d6a84" stroke-width="1"/><path d="M4.9 0.7 V3.4 H7.6" fill="none" stroke="#a5b1c8" stroke-width="0.6"/></svg>
<div class="abs" style="left:23px;top:459.17px;width:588px;height:11.383px;background:#ffffff"></div>
<div class="t" style="left:24.6px;top:459.57399999999996px;font-size:7.1px;transform:scaleX(0.89);color:#222;">9</div>
<div class="t" style="left:43.8px;top:459.57399999999996px;font-size:7.1px;transform:scaleX(0.91);color:#222;">Querverweise</div>
<svg class="abs" style="left:338px;top:460.47px" width="8.5" height="8.5" viewBox="0 0 8.5 8.5"><path d="M0.8 1.2 Q0.8 0.7 1.3 0.7 H4.9 L7.6 3.4 V7.2 Q7.6 7.7 7.1 7.7 H1.3 Q0.8 7.7 0.8 7.2Z" fill="#e9f0fb" stroke="#8a97b0" stroke-width="0.8"/><path d="M7.6 3.4 V7.2 Q7.6 7.7 7.1 7.7 H1.3" fill="none" stroke="#5d6a84" stroke-width="1"/><path d="M4.9 0.7 V3.4 H7.6" fill="none" stroke="#a5b1c8" stroke-width="0.6"/></svg>
<div class="abs" style="left:23px;top:470.56px;width:588px;height:11.383px;background:#dce8fb"></div>
<div class="abs" style="left:23px;top:481.94px;width:588px;height:11.383px;background:#ffffff"></div>
<div class="abs" style="left:23px;top:493.32px;width:588px;height:11.383px;background:#dce8fb"></div>
<div class="abs" style="left:23px;top:504.71px;width:588px;height:11.383px;background:#ffffff"></div>
<div class="abs" style="left:41px;top:151.9px;width:1px;height:364.6px;background:#cdd5f0"></div>
<div class="abs" style="left:334px;top:151.9px;width:1px;height:364.6px;background:#d3dbf2"></div>
<div class="abs" style="left:348px;top:151.9px;width:1px;height:364.6px;background:#d3dbf2"></div>
<div class="abs" style="left:23px;top:140.6px;width:18.5px;height:0;border-top:1px dotted #e8eefa"></div>
<div class="abs" style="left:42px;top:140.5px;width:0;height:11px;border-left:1px dotted #a8c0ee"></div>
<!-- scrollbar column -->
<div class="abs" style="left:611px;top:140.5px;width:11px;height:375.5px;background:linear-gradient(90deg,#fbfcfe,#ffffff 60%,#eef3fc)"></div>
<div class="abs" style="left:23px;top:516px;width:599px;height:3.5px;background:linear-gradient(#dfe5f0 0%,#ffffff 35%,#f4f7fc 100%)"></div>
<div class="abs" style="left:621px;top:129px;width:1px;height:390.5px;background:#dfe7f6"></div>
<!-- column chooser -->
<svg class="abs" style="left:612px;top:131px" width="8" height="8" viewBox="0 0 8 8"><rect x="0.5" y="1.5" width="7" height="6" fill="#f5f5f5" stroke="#808080" stroke-width="0.9"/><rect x="2" y="0.5" width="4" height="2" fill="#bbb"/><rect x="2.2" y="3.5" width="4" height="2.5" fill="#fff" stroke="#888" stroke-width="0.6"/></svg>
<!-- nav icons -->
<svg class="abs" style="left:613.5px;top:142.5px" width="6" height="5" viewBox="0 0 6 5"><rect x="0.5" y="0" width="5" height="0.9" fill="#c4c6b2"/><path d="M0.4 4.8 L3 1.6 L5.6 4.8Z" fill="#b9bba6"/></svg>
<svg class="abs" style="left:614px;top:152.8px" width="5" height="4.5" viewBox="0 0 5 4.5"><path d="M2.5 0 L5 2.25 L2.5 4.5 L0 2.25Z" fill="#bcbea8"/></svg>
<svg class="abs" style="left:613.5px;top:161.8px" width="6" height="3.5" viewBox="0 0 6 3.5"><path d="M0.4 3.4 L3 0.2 L5.6 3.4Z" fill="#bcbea8"/></svg>
<svg class="abs" style="left:613.5px;top:307.5px" width="6" height="5" viewBox="0 0 6 5"><path d="M0.7 0.3 V4.7 M3 0.3 V4.7 M5.3 0.3 V4.7" stroke="#bcbea8" stroke-width="1.1"/></svg>
<svg class="abs" style="left:612.5px;top:319.5px" width="8" height="7.5" viewBox="0 0 8 7.5"><circle cx="3" cy="3" r="2.3" fill="none" stroke="#bdbfac" stroke-width="0.9"/><path d="M4.7 4.7 L7.4 7.2" stroke="#b6b8a2" stroke-width="1.2"/></svg>
<svg class="abs" style="left:613px;top:334.8px" width="7" height="4.5" viewBox="0 0 7 4.5"><path d="M0.5 4.3 V0.6 L1.9 2.6 L3.3 0.6 V4.3 M4.6 0.5 V4.2 H6.6" stroke="#c4c6b2" stroke-width="0.8" fill="none"/></svg>
<svg class="abs" style="left:612.8px;top:347px" width="7.5" height="6" viewBox="0 0 7.5 6"><path d="M0.5 0.6 H7 L4.4 3.3 V5.6 H3.1 V3.3Z" fill="#eceee6" stroke="#b4b6a0" stroke-width="0.9"/></svg>
<svg class="abs" style="left:613.5px;top:495.2px" width="6" height="3.5" viewBox="0 0 6 3.5"><path d="M0.4 0.1 L3 3.3 L5.6 0.1Z" fill="#bcbea8"/></svg>
<svg class="abs" style="left:614px;top:503.2px" width="5" height="4.5" viewBox="0 0 5 4.5"><path d="M2.5 0 L5 2.25 L2.5 4.5 L0 2.25Z" fill="#bcbea8"/></svg>
<svg class="abs" style="left:613.5px;top:512px" width="6" height="5" viewBox="0 0 6 5"><path d="M0.4 0.2 L3 3.4 L5.6 0.2Z" fill="#b9bba6"/><rect x="0.5" y="4.1" width="5" height="0.9" fill="#c4c6b2"/></svg>
</body></html>
